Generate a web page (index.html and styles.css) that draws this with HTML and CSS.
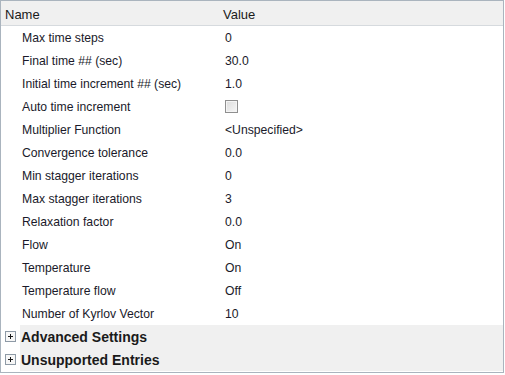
FILE: index.html
```html
<!doctype html>
<html lang="en">
  <head>
    <meta charset="UTF-8" />
    <title>Properties</title>
    <link rel="stylesheet" href="styles.css">
  </head>
  <body>
    <div class="panel">
      <div class="header">
        <span class="col-name">Name</span>
        <span class="col-value">Value</span>
      </div>

      <div class="row"><span class="name">Max time steps</span><span class="value">0</span></div>
      <div class="row"><span class="name">Final time ## (sec)</span><span class="value">30.0</span></div>
      <div class="row"><span class="name">Initial time increment ## (sec)</span><span class="value">1.0</span></div>
      <div class="row"><span class="name">Auto time increment</span><span class="value"><span class="checkbox"></span></span></div>
      <div class="row"><span class="name">Multiplier Function</span><span class="value">&lt;Unspecified&gt;</span></div>
      <div class="row"><span class="name">Convergence tolerance</span><span class="value">0.0</span></div>
      <div class="row"><span class="name">Min stagger iterations</span><span class="value">0</span></div>
      <div class="row"><span class="name">Max stagger iterations</span><span class="value">3</span></div>
      <div class="row"><span class="name">Relaxation factor</span><span class="value">0.0</span></div>
      <div class="row"><span class="name">Flow</span><span class="value">On</span></div>
      <div class="row"><span class="name">Temperature</span><span class="value">On</span></div>
      <div class="row"><span class="name">Temperature flow</span><span class="value">Off</span></div>
      <div class="row"><span class="name">Number of Kyrlov Vector</span><span class="value">10</span></div>

      <div class="group">
        <span class="expander">
          <svg width="11" height="11" viewBox="0 0 11 11">
            <rect x="0.5" y="0.5" width="10" height="10" fill="#f7f7f7" stroke="#8e9aa6" />
            <path d="M3 5.5h5M5.5 3v5" stroke="#1a1a1a" />
          </svg>
        </span>
        <span class="group-label">Advanced Settings</span>
      </div>
      <div class="group">
        <span class="expander">
          <svg width="11" height="11" viewBox="0 0 11 11">
            <rect x="0.5" y="0.5" width="10" height="10" fill="#f7f7f7" stroke="#8e9aa6" />
            <path d="M3 5.5h5M5.5 3v5" stroke="#1a1a1a" />
          </svg>
        </span>
        <span class="group-label">Unsupported Entries</span>
      </div>
    </div>
  </body>
</html>
```

FILE: styles.css
```css
/* Reset */
* {
  margin: 0;
  padding: 0;
  box-sizing: border-box;
}

body {
  background-color: #ffffff;
  font-family: "Liberation Sans", Arial, sans-serif;
  font-size: 12.2px;
  color: #1a1a2a;
}

/* Panel */
.panel {
  width: 504px;
  height: 373px;
  border: 1px solid #aab4be;
  background-color: #ffffff;
}

/* Column header */
.header {
  display: flex;
  align-items: center;
  height: 25px;
  background-color: #f0f0f0;
  border-bottom: 1px solid #d6dade;
  font-size: 13px;
  color: #1a1a1a;
  padding-top: 2px;
}

.col-name {
  width: 222px;
  padding-left: 4px;
}

.col-value {
  flex: 1;
}

/* Property rows */
.row {
  display: flex;
  align-items: center;
  height: 23px;
}

.name {
  width: 224px;
  padding-left: 21px;
  white-space: nowrap;
}

.value {
  flex: 1;
  display: flex;
  align-items: center;
}

.checkbox {
  display: inline-block;
  width: 13px;
  height: 13px;
  border: 1px solid #8f8f8f;
  background: linear-gradient(135deg, #dcdcdc, #f6f6f6);
  box-shadow: inset 0 0 0 1px #f4f4f4;
  margin-top: -1px;
}

/* Collapsed groups */
.group {
  display: flex;
  align-items: center;
  height: 23px;
}

.expander {
  width: 19px;
  height: 100%;
  display: flex;
  align-items: center;
  justify-content: center;
  background-color: #ffffff;
}

.expander svg {
  display: block;
}

.group-label {
  flex: 1;
  height: 100%;
  display: flex;
  align-items: center;
  padding-left: 1px;
  background-color: #f0f0f0;
  font-weight: bold;
  font-size: 14px;
  color: #1a1a1a;
}
```
